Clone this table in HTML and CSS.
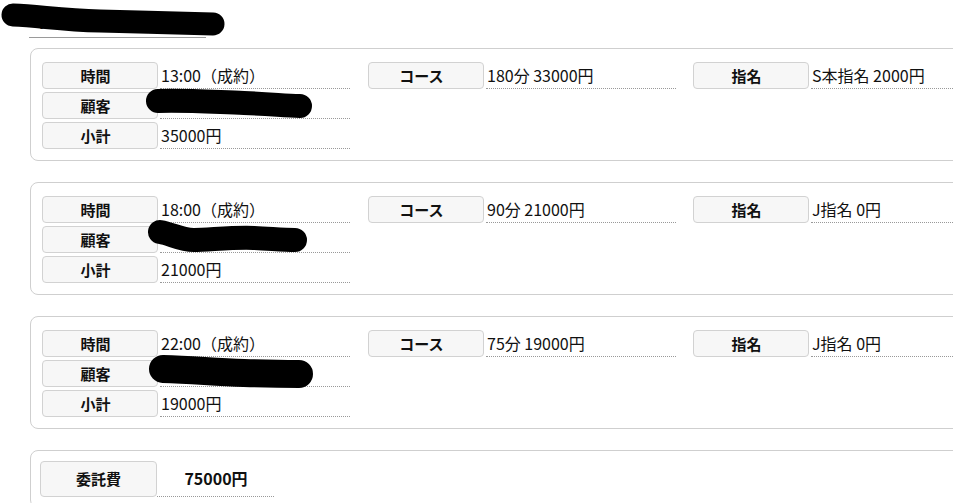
FILE: index.html
```html
<!DOCTYPE html>
<html lang="ja">
<head>
  <meta charset="UTF-8">
  <meta name="viewport" content="width=device-width, initial-scale=1">
  <title>精算明細</title>
  <link rel="stylesheet" href="styles.css">
</head>
<body>
  <div class="page">
    <div class="title">
      <span class="title-text">担当者名</span>
      <svg class="redact redact-title" viewBox="0 0 240 40"><path d="M13 15 C 40 16, 60 20, 100 21 S 170 23, 213 24"/></svg>
    </div>

    <!-- 予約 1 -->
    <div class="card">
      <div class="col">
        <div class="field"><div class="label">時間</div><div class="value">13:00（成約）</div></div>
        <div class="field">
          <div class="label">顧客</div>
          <div class="value">
            <svg class="redact redact-name" viewBox="0 0 172 36"><path class="w24" d="M14 15 C 40 14, 70 16, 100 17 S 140 20, 156 20"/></svg>
          </div>
        </div>
        <div class="field"><div class="label">小計</div><div class="value">35000円</div></div>
      </div>
      <div class="col">
        <div class="field"><div class="label">コース</div><div class="value">180分 33000円</div></div>
      </div>
      <div class="col">
        <div class="field"><div class="label">指名</div><div class="value">S本指名 2000円</div></div>
      </div>
    </div>

    <!-- 予約 2 -->
    <div class="card">
      <div class="col">
        <div class="field"><div class="label">時間</div><div class="value">18:00（成約）</div></div>
        <div class="field">
          <div class="label">顧客</div>
          <div class="value">
            <svg class="redact redact-name" viewBox="0 0 172 36"><path class="w24" d="M16 12 C 28 14, 36 20, 50 20 S 90 17, 110 18 S 140 20, 151 20"/></svg>
          </div>
        </div>
        <div class="field"><div class="label">小計</div><div class="value">21000円</div></div>
      </div>
      <div class="col">
        <div class="field"><div class="label">コース</div><div class="value">90分 21000円</div></div>
      </div>
      <div class="col">
        <div class="field"><div class="label">指名</div><div class="value">J指名 0円</div></div>
      </div>
    </div>

    <!-- 予約 3 -->
    <div class="card">
      <div class="col">
        <div class="field"><div class="label">時間</div><div class="value">22:00（成約）</div></div>
        <div class="field">
          <div class="label">顧客</div>
          <div class="value">
            <svg class="redact redact-name" viewBox="0 0 172 36"><path class="w28" d="M19 15 C 50 16, 70 18, 100 19 S 140 20, 155 20"/></svg>
          </div>
        </div>
        <div class="field"><div class="label">小計</div><div class="value">19000円</div></div>
      </div>
      <div class="col">
        <div class="field"><div class="label">コース</div><div class="value">75分 19000円</div></div>
      </div>
      <div class="col">
        <div class="field"><div class="label">指名</div><div class="value">J指名 0円</div></div>
      </div>
    </div>

    <!-- 合計 -->
    <div class="card total">
      <div class="field"><div class="label">委託費</div><div class="value">75000円</div></div>
    </div>
  </div>
</body>
</html>
```

FILE: styles.css
```css
html { overflow: hidden; }
body {
  margin: 0;
  font-family: "Noto Sans CJK JP", "Noto Sans", sans-serif;
  font-size: 15px;
  color: #111;
  background: #fff;
}
.page {
  padding-left: 30px;
}
.title {
  position: relative;
  width: 177px;
  height: 37px;
  margin-left: -1px;
  border-bottom: 1px solid #9a9a9a;
}
.title-text {
  display: block;
  padding: 6px 0 0 10px;
  font-size: 18px;
  font-weight: bold;
}
.card {
  display: flex;
  gap: 18px;
  width: 1000px;
  margin-top: 10px;
  margin-bottom: 21px;
  padding: 13px 0 11px 11px;
  border: 1px solid #cfcfcf;
  border-radius: 8px;
}
.col {
  display: flex;
  flex-direction: column;
  gap: 3px;
  width: 308px;
}
.col + .col + .col { margin-left: -1px; }
.field {
  display: flex;
  gap: 2px;
}
.label {
  box-sizing: border-box;
  width: 116px;
  height: 27px;
  line-height: 25px;
  padding-right: 9px;
  border: 1px solid #d2d2d2;
  border-radius: 4px;
  background: #f7f7f7;
  font-weight: bold;
  text-align: center;
}
.value {
  position: relative;
  box-sizing: border-box;
  width: 190px;
  height: 27px;
  line-height: 26px;
  padding-left: 1px;
  border-bottom: 1px dotted #999;
  font-size: 16px;
  white-space: nowrap;
}

/* 合計 */
.card.total {
  padding: 10px 0 10px 9px;
}
.total .field { gap: 0; }
.total .label {
  width: 117px;
  height: 36px;
  line-height: 34px;
  padding-right: 0;
}
.total .value {
  width: 117px;
  height: 36px;
  line-height: 34px;
  font-weight: bold;
  text-align: center;
}

/* 黒塗り */
.redact {
  position: absolute;
  overflow: visible;
  pointer-events: none;
}
.redact path {
  fill: none;
  stroke: #000;
  stroke-linecap: round;
  stroke-linejoin: round;
  stroke-width: 23;
}
.redact path.w24 { stroke-width: 24; }
.redact path.w28 { stroke-width: 28; }
.redact-title {
  left: -29px;
  top: 0;
  width: 240px;
  height: 40px;
}
.redact-name {
  left: -16px;
  top: -6px;
  width: 172px;
  height: 36px;
}
```
